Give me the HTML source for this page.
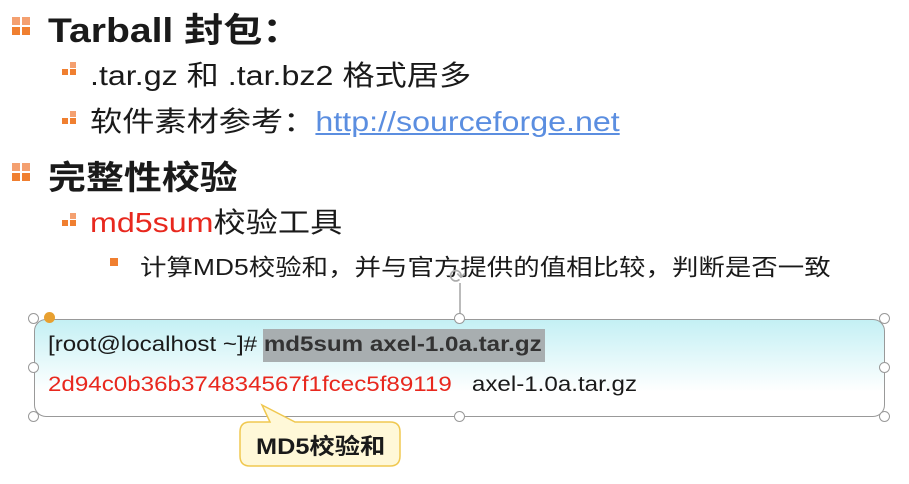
<!DOCTYPE html>
<html><head><meta charset="utf-8"><style>
body{margin:0;width:909px;height:484px;background:#fff;position:relative;overflow:hidden;font-family:"Liberation Sans","Noto Sans CJK SC",sans-serif;color:#1a1a1a}
.a{position:absolute;white-space:nowrap;transform:scaleX(1.15);transform-origin:0 50%}
.b1{position:absolute;width:18px;height:18px}
.b1 i{position:absolute;width:8px;height:8px;background:#f07f30}
.b2 i{position:absolute;background:#f07f30}
.h{position:absolute;width:9px;height:9px;border:1.5px solid #999;border-radius:50%;background:#fff}
</style></head><body>
<div class="b1" style="left:12px;top:17px"><i style="left:0;top:0;background:#f4a070"></i><i style="left:10px;top:0;background:#f4a070"></i><i style="left:0;top:10px"></i><i style="left:10px;top:10px"></i></div>
<div class="a" style="left:48px;top:3px;font-size:34px;font-weight:bold">Tarball 封包：</div>
<div class="b2" style="position:absolute;left:62px;top:62px"><i style="left:8px;top:0;width:6px;height:6px;background:#f4a070"></i><i style="left:0;top:7px;width:6px;height:6px"></i><i style="left:8px;top:7px;width:6px;height:6px"></i></div>
<div class="a" style="left:90px;top:54px;font-size:28px">.tar.gz 和 .tar.bz2 格式居多</div>
<div class="b2" style="position:absolute;left:62px;top:111px"><i style="left:8px;top:0;width:6px;height:6px;background:#f4a070"></i><i style="left:0;top:7px;width:6px;height:6px"></i><i style="left:8px;top:7px;width:6px;height:6px"></i></div>
<div class="a" style="left:90px;top:100px;font-size:28px">软件素材参考：<span style="color:#5b8ee0;text-decoration:underline">http://sourceforge.net</span></div>
<div class="b1" style="left:12px;top:163px"><i style="left:0;top:0;background:#f4a070"></i><i style="left:10px;top:0;background:#f4a070"></i><i style="left:0;top:10px"></i><i style="left:10px;top:10px"></i></div>
<div class="a" style="left:48px;top:151px;font-size:33px;font-weight:bold">完整性校验</div>
<div class="b2" style="position:absolute;left:62px;top:213px"><i style="left:8px;top:0;width:6px;height:6px;background:#f4a070"></i><i style="left:0;top:7px;width:6px;height:6px"></i><i style="left:8px;top:7px;width:6px;height:6px"></i></div>
<div class="a" style="left:90px;top:201px;font-size:28px"><span style="color:#e8281e">md5sum</span>校验工具</div>
<div style="position:absolute;left:110px;top:258px;width:8px;height:8px;background:#f07f30"></div>
<div class="a" style="left:140px;top:248px;font-size:23px">计算MD5校验和，并与官方提供的值相比较，判断是否一致</div>
<div style="position:absolute;left:459px;top:283px;width:1.5px;height:36px;background:#bbb"></div>
<div style="position:absolute;left:449px;top:264px;font-size:20px;color:#aaa">⟳</div>
<div style="position:absolute;left:34px;top:319px;width:851px;height:98px;border:1.5px solid #999;border-radius:12px;background:linear-gradient(#c4f0f4,#fff 75%);box-sizing:border-box"></div>
<div style="position:absolute;left:263px;top:329px;width:282px;height:33px;background:#a8aeb0"></div>
<div class="a" style="left:48px;top:333px;font-size:21px">[root@localhost ~]# <b style="color:#333">md5sum axel-1.0a.tar.gz</b></div>
<div class="a" style="left:48px;top:373px;font-size:21px"><span style="color:#e8281e">2d94c0b36b374834567f1fcec5f89119</span>&nbsp;&nbsp; axel-1.0a.tar.gz</div>
<div class="h" style="left:28px;top:313px"></div><div class="h" style="left:454px;top:313px"></div><div class="h" style="left:879px;top:313px"></div>
<div class="h" style="left:28px;top:362px"></div><div class="h" style="left:879px;top:362px"></div>
<div class="h" style="left:28px;top:411px"></div><div class="h" style="left:454px;top:411px"></div><div class="h" style="left:879px;top:411px"></div>
<div style="position:absolute;left:44px;top:312px;width:11px;height:11px;border-radius:50%;background:#e8a030"></div>
<svg style="position:absolute;left:0;top:0" width="909" height="484"><path d="M250 422 Q240 422 240 432 L240 456 Q240 466 250 466 L390 466 Q400 466 400 456 L400 432 Q400 422 390 422 L295 422 L262 405 L270 422 Z" fill="#fff8d8" stroke="#f0c850" stroke-width="1.5"/></svg>
<div class="a" style="left:256px;top:429px;font-size:22px;font-weight:bold">MD5校验和</div>
</body></html>
